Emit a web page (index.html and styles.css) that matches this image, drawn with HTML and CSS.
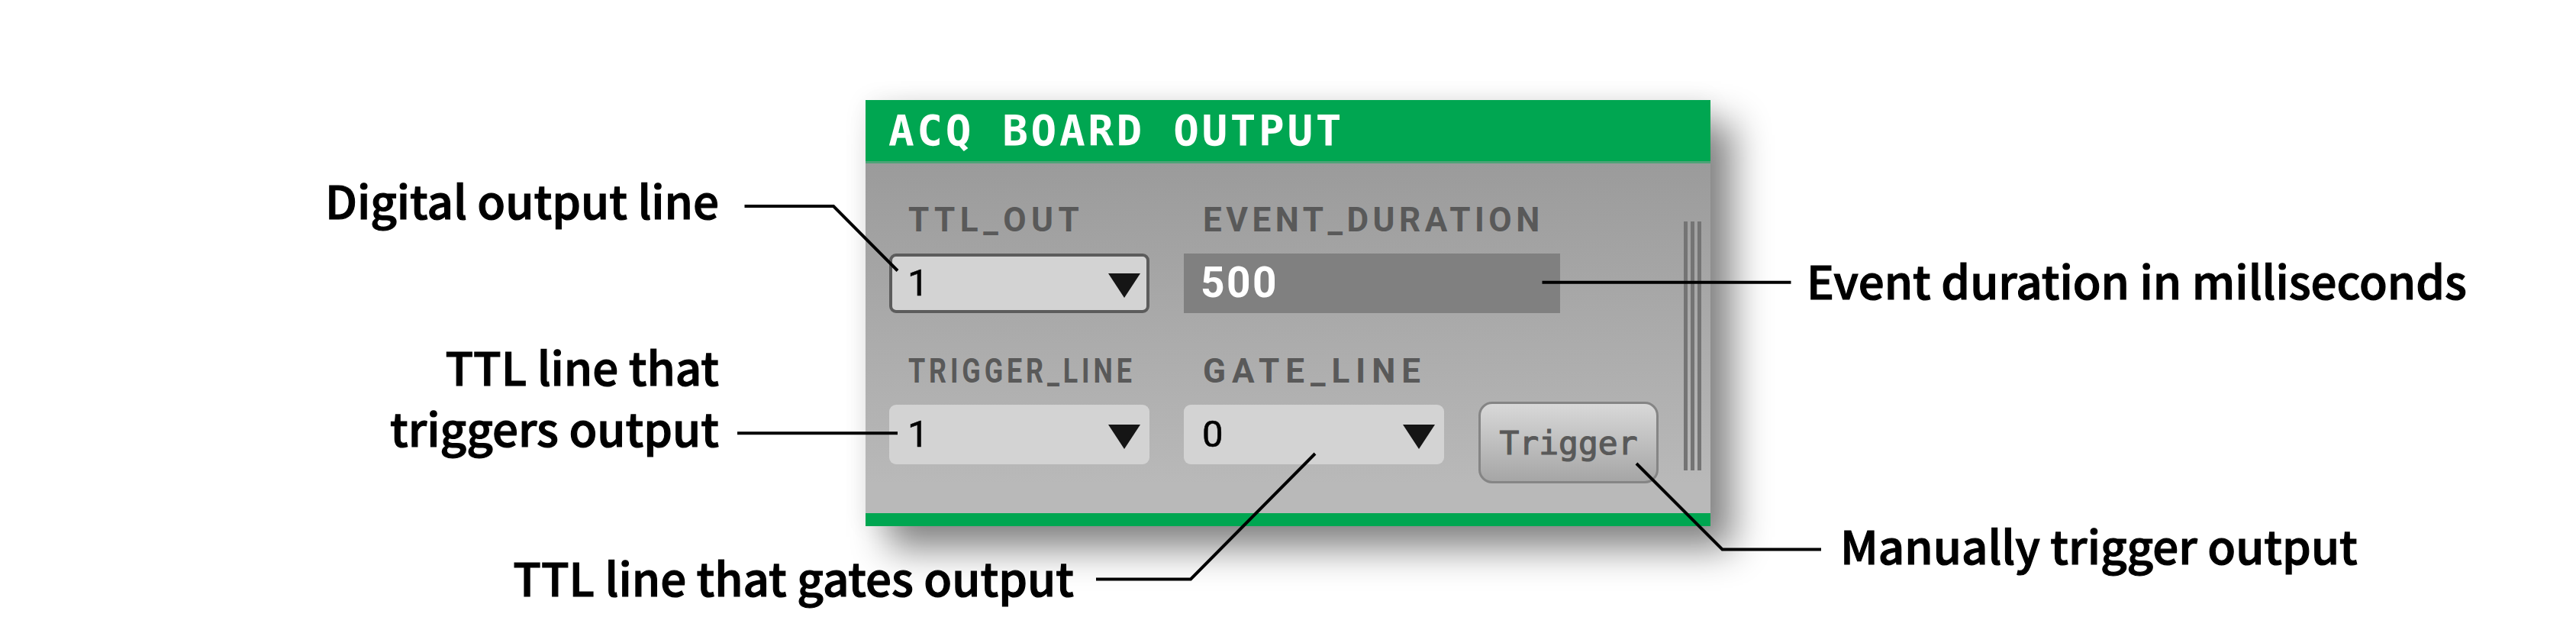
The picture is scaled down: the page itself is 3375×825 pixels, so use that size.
FILE: index.html
```html
<!DOCTYPE html>
<html lang="en">
<head>
<meta charset="utf-8">
<title>Acq Board Output</title>
<link rel="stylesheet" href="styles.css">
</head>
<body>
<main class="diagram">
  <section class="panel">
    <header class="panel-title">ACQ BOARD OUTPUT</header>
    <div class="panel-body">
      <div class="fields">
        <div class="field ttl">
          <span class="label"><span class="fit fit-ttl">TTL_OUT</span></span>
          <div class="select focused"><span>1</span><svg class="arrow" viewBox="0 0 42 32"><path d="M0 0H42L21 32Z"/></svg></div>
        </div>
        <div class="field duration">
          <span class="label"><span class="fit fit-event">EVENT_DURATION</span></span>
          <div class="input">500</div>
        </div>
        <div class="field">
          <span class="label"><span class="fit fit-trigger">TRIGGER_LINE</span></span>
          <div class="select"><span>1</span><svg class="arrow" viewBox="0 0 42 32"><path d="M0 0H42L21 32Z"/></svg></div>
        </div>
        <div class="field">
          <span class="label"><span class="fit fit-gate">GATE_LINE</span></span>
          <div class="select"><span>0</span><svg class="arrow" viewBox="0 0 42 32"><path d="M0 0H42L21 32Z"/></svg></div>
        </div>
        <button class="trigger">Trigger</button>
      </div>
      <div class="grip"><i></i><i></i><i></i></div>
    </div>
  </section>
  <svg class="leaders" viewBox="0 0 3375 825">
    <path d="M975.5 270H1092L1176 354.500"/>
    <path d="M966 567.300H1176"/>
    <path d="M2020.500 369.800H2346.500"/>
    <path d="M1436 758.500H1560L1723 594"/>
    <path d="M2144 607L2256.500 719.500H2386"/>
  </svg>
  <p class="callout c-digital">Digital output line</p>
  <p class="callout c-triggers">TTL line that<br>triggers output</p>
  <p class="callout c-gates">TTL line that gates output</p>
  <p class="callout c-event">Event duration in milliseconds</p>
  <p class="callout c-manual">Manually trigger output</p>
</main>
</body>
</html>
```
FILE: styles.css
```css
* { box-sizing: border-box; }
body { margin: 0; background: #fff; }
.diagram { position: relative; width: 3375px; height: 825px; padding: 131px 0 0 1134px; overflow: hidden; }

.panel {
  width: 1107px; height: 558px; display: flex; flex-direction: column;
  border-bottom: 17px solid #00a651;
  box-shadow: 30px 30px 45px rgba(0,0,0,.47), 0 0 30px rgba(0,0,0,.07);
}
.panel-title {
  height: 83px; padding-left: 30px; background: #00a651; border-bottom: 3px solid #4da477;
  color: #fff; font: bold 56px/80px "DejaVu Sans Mono", monospace; letter-spacing: 3.6px; white-space: pre;
}
.panel-body {
  flex: 1; display: flex; justify-content: space-between; padding: 43px 12px 0 31px;
  background: linear-gradient(#9b9b9b, #b9b9b9 92%);
}
.fields { display: grid; grid-template-columns: 341px 341px 236px; grid-template-rows: 153px 153px; gap: 45px; }
.field { display: flex; flex-direction: column; gap: 20px; }
.duration { grid-column: 2 / 4; }
.label {
  height: 55px; padding-left: 25px; color: #595959;
  font: bold 44px/62px Roboto, sans-serif; white-space: nowrap;
}
.fit { display: inline-block; transform-origin: 0 50%; letter-spacing: 6px; }
.fit-ttl { letter-spacing: 6.5px; }
.fit-event { letter-spacing: 5.5px; }
.fit-trigger { transform: scaleX(.815); }
.fit-gate { letter-spacing: 8px; }
.select {
  height: 78px; padding: 0 12px 0 24px; display: flex; align-items: center; justify-content: space-between;
  border-radius: 9px; background: #d3d3d3; color: #000; font: 49px/82px Roboto, sans-serif;
  -webkit-text-stroke: .6px #000;
}
.focused { border: 4px solid #5c5c5c; padding: 0 8px 0 20px; }
.arrow { width: 42px; height: 34px; padding-top: 2px; margin-top: 3px; fill: #151515; }
.input { width: 493px; height: 78px; padding-left: 22px; background: #808080; color: #fff; font: bold 55px/77px Roboto, sans-serif; letter-spacing: 2.500px; }
.trigger {
  width: 236px; height: 107px; margin-top: 71px; padding: 0; border: 3px solid #858585; border-radius: 18px;
  background: linear-gradient(#d8d8d8, #a6a6a6); color: #595959; -webkit-text-stroke: 1.2px #595959;
  font: 43px/102px "DejaVu Sans Mono", monospace; text-align: center;
}
.grip { display: flex; gap: 4px; height: 326px; margin-top: 33px; }
.grip i { width: 5px; background: #747474; }

.leaders { position: absolute; inset: 0; width: 3375px; height: 825px; fill: none; stroke: #000; stroke-width: 4; }
.callout {
  position: absolute; margin: 0; color: #000; white-space: nowrap;
  font: 500 60px/80px "Noto Sans CJK SC", "Noto Sans", sans-serif;
  -webkit-text-stroke: 1.2px #000;
}
.c-digital { right: 2433px; top: 221px; }
.c-triggers { right: 2433px; top: 439px; text-align: right; }
.c-gates { right: 1968px; top: 715px; }
.c-event { left: 2367px; top: 326px; }
.c-manual { left: 2411px; top: 673px; }
```
